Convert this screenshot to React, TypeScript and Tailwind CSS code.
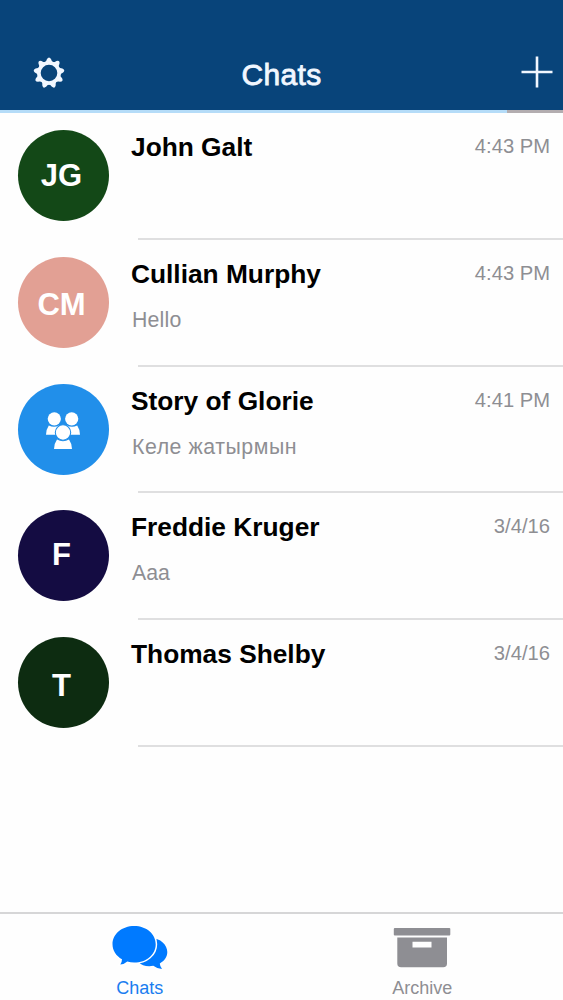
import React from 'react';

interface Chat {
  name: string;
  time: string;
  message?: string;
  initials?: string;
  avatarClass: string;
  messageClass?: string;
}

const chats: Chat[] = [
  { name: 'John Galt', time: '4:43 PM', initials: 'JG', avatarClass: 'bg-[#134817]' },
  { name: 'Cullian Murphy', time: '4:43 PM', message: 'Hello', initials: 'CM', avatarClass: 'bg-[#e2a094] pt-1.5', messageClass: 'tracking-[0.2px]' },
  { name: 'Story of Glorie', time: '4:41 PM', message: 'Келе жатырмын', avatarClass: 'bg-[#218fea] pt-[3px] pr-0.5', messageClass: 'tracking-[0.55px]' },
  { name: 'Freddie Kruger', time: '3/4/16', message: 'Aaa', initials: 'F', avatarClass: 'bg-[#140c42] pb-0.5' },
  { name: 'Thomas Shelby', time: '3/4/16', initials: 'T', avatarClass: 'bg-[#0d2c11] pt-1.5' },
];

const gearTeeth = [0, 40, 80, 120, 160, 200, 240, 280, 320];

const GearIcon: React.FC = () => (
  <svg width="32" height="32" viewBox="-16 -16 32 32" fill="#f1f7ff">
    <circle r="10" fill="none" stroke="#f1f7ff" strokeWidth="3.4" />
    {gearTeeth.map(angle => (
      <path key={angle} d="M-4.4 -10.4 Q-2.6 -11.4 -2 -14 Q0 -17 2 -14 Q2.6 -11.4 4.4 -10.4 Z" transform={`rotate(${angle})`} />
    ))}
  </svg>
);

const PlusIcon: React.FC = () => (
  <svg width="32" height="32" viewBox="0 0 32 32" fill="none" stroke="#f1f7ff" strokeWidth="2.6">
    <path d="M16 0.5V31.5M0.5 16H31.5" />
  </svg>
);

const GroupIcon: React.FC = () => (
  <svg width="36" height="38" viewBox="0 0 36 38" fill="white">
    <circle cx="9.3" cy="6.8" r="6.6" />
    <circle cx="26.7" cy="6.8" r="6.6" />
    <path d="M3.8 13.4Q9 16 14 13.4L11 22.8H1Q1.2 17 3.8 13.4Z" />
    <path d="M32.2 13.4Q27 16 22 13.4L25 22.8H35Q34.8 17 32.2 13.4Z" />
    <circle cx="18" cy="20.5" r="7.7" stroke="#218fea" strokeWidth="1.1" />
    <path d="M12 27.4Q18 31 24 27.4Q26.7 31 27 37H9Q9.3 31 12 27.4Z" />
  </svg>
);

const BubblesIcon: React.FC = () => (
  <svg width="56" height="44" viewBox="0 0 56 44" fill="#007aff">
    <path d="M36 12C48 11 55.3 18.5 55.3 26C55.3 31 52.5 34.8 47.8 37.4Q48 40.5 50 43Q44.5 42.5 41.3 39.8C35 41 29.5 39.3 27 36.5Z" />
    <path
      d="M22.2 0C34.5 0 43.7 8 43.7 18.2C43.7 28.500 34.5 36.5 22.2 36.5Q18.5 36.5 15.3 35.6Q12.5 38.3 8.3 38.5Q10 36.3 10 33.2C4 29.8 0.5 24.5 0.5 18.2C0.5 8 10 0 22.2 0Z"
      stroke="white"
      strokeWidth="3"
      paintOrder="stroke"
    />
  </svg>
);

const ArchiveIcon: React.FC = () => (
  <svg width="58" height="40" viewBox="0 0 58 40" fill="#8e8e93">
    <rect x="0.8" y="0" width="56.5" height="7.5" rx="1" />
    <path fillRule="evenodd" d="M4.3 9.5H54V35.5Q54 39.3 50.2 39.3H8.1Q4.3 39.3 4.3 35.5ZM19.5 13.8V19.5H38.5V13.8Z" />
  </svg>
);

const ChatRow: React.FC<{ chat: Chat }> = ({ chat }) => (
  <li className="flex h-[126.75px] pl-[18px]">
    <div className={`mt-[17px] flex size-[91px] shrink-0 items-center justify-center rounded-full ${chat.avatarClass}`}>
      {chat.initials ? (
        <span className="pr-1 text-[31px] leading-9 font-bold text-white">{chat.initials}</span>
      ) : (
        <GroupIcon />
      )}
    </div>
    <div className="ml-[22px] flex flex-1 flex-col justify-between">
      <div className="pt-[19px] pr-[13px]">
        <div className="flex items-start justify-between">
          <h2 className="text-[26.3px] leading-[30px] font-bold text-black">{chat.name}</h2>
          <time className="pt-0.5 text-[20.2px] leading-6 text-[#8e8e93]">{chat.time}</time>
        </div>
        {chat.message && (
          <p className={`mt-[19px] pl-px text-[21.3px] leading-6 text-[#8e8e93] ${chat.messageClass ?? ''}`}>{chat.message}</p>
        )}
      </div>
      <div className="ml-[7px] h-0.5 bg-[#dfdfe0]" />
    </div>
  </li>
);

const App: React.FC = () => {
  return (
    <div className="flex h-[1000px] w-[563px] flex-col overflow-hidden bg-[#fefefe] font-['Liberation_Sans',Arial,sans-serif]">
      <header className="flex h-[110px] shrink-0 items-end justify-between bg-[#08447a] pr-[10px] pb-[22px] pl-[33px]">
        <button aria-label="Settings" className="-mb-px">
          <GearIcon />
        </button>
        <h1 className="-mb-px pr-[23px] text-[30px] leading-7 tracking-[0.3px] text-[#f1f7ff] [-webkit-text-stroke:0.8px_#f1f7ff]">Chats</h1>
        <button aria-label="New chat">
          <PlusIcon />
        </button>
      </header>
      <div className="flex h-[3px] shrink-0">
        <div className="w-[507px] bg-[#b5dcf8]" />
        <div className="flex-1 bg-[#b3adb0]" />
      </div>

      <ul className="flex-1">
        {chats.map(chat => (
          <ChatRow key={chat.name} chat={chat} />
        ))}
      </ul>

      <nav className="grid h-[88px] shrink-0 grid-cols-2 border-t-2 border-[#d6d6d7] text-[18px] leading-5">
        <a className="flex flex-col items-center pt-3 pr-[2px] text-[#1a7df0]">
          <BubblesIcon />
          <span className="mt-2">Chats</span>
        </a>
        <a className="flex flex-col items-center pt-[14px] text-[#8e8e93]">
          <ArchiveIcon />
          <span className="mt-[10px]">Archive</span>
        </a>
      </nav>
    </div>
  );
};

export default App;
